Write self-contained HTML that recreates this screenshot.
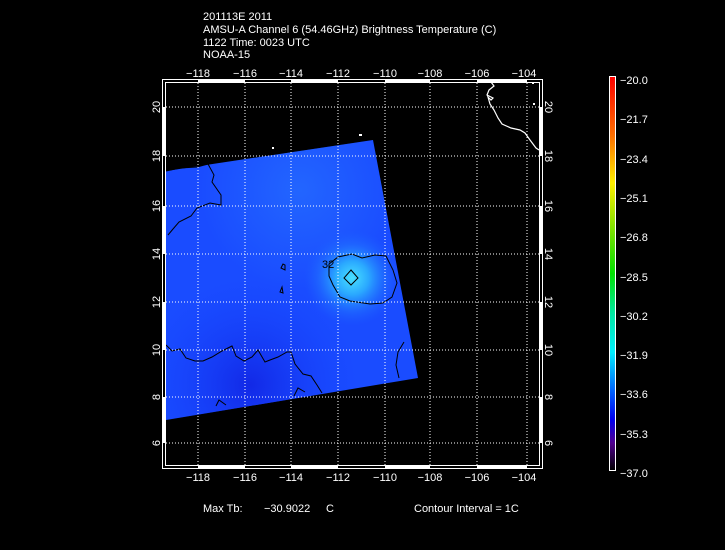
<!DOCTYPE html>
<html><head><meta charset="utf-8"><style>
html,body{margin:0;padding:0;background:#000;width:725px;height:550px;overflow:hidden}
svg{display:block}
text{font-family:"Liberation Sans",sans-serif;fill:#fff;font-size:11px}
</style></head><body>
<svg width="725" height="550" viewBox="0 0 725 550" xmlns="http://www.w3.org/2000/svg">
<defs>
<linearGradient id="cb" x1="0" y1="0" x2="0" y2="1">
<stop offset="0" stop-color="#ff0000"/>
<stop offset="0.15" stop-color="#ff7000"/>
<stop offset="0.27" stop-color="#ffee00"/>
<stop offset="0.4" stop-color="#70e000"/>
<stop offset="0.5" stop-color="#00e000"/>
<stop offset="0.6" stop-color="#00e8a0"/>
<stop offset="0.7" stop-color="#00f0ff"/>
<stop offset="0.8" stop-color="#0060ff"/>
<stop offset="0.87" stop-color="#0000f0"/>
<stop offset="0.93" stop-color="#500090"/>
<stop offset="1" stop-color="#000000"/>
</linearGradient>
<radialGradient id="hot" cx="352" cy="278" r="48" gradientUnits="userSpaceOnUse">
<stop offset="0" stop-color="#48e0ff"/>
<stop offset="0.35" stop-color="#2aa8ff"/>
<stop offset="0.7" stop-color="#2070ff" stop-opacity="0.6"/>
<stop offset="1" stop-color="#1c5cff" stop-opacity="0"/>
</radialGradient>
<radialGradient id="dk" cx="250" cy="385" r="110" gradientUnits="userSpaceOnUse">
<stop offset="0" stop-color="#1020e0" stop-opacity="0.8"/>
<stop offset="1" stop-color="#1440ff" stop-opacity="0"/>
</radialGradient>
<radialGradient id="lt" cx="300" cy="190" r="100" gradientUnits="userSpaceOnUse">
<stop offset="0" stop-color="#2670ff" stop-opacity="0.7"/>
<stop offset="1" stop-color="#2670ff" stop-opacity="0"/>
</radialGradient>
<clipPath id="sw"><polygon points="166,171 373,140 418,378 166,420"/></clipPath>
</defs>

<text x="203" y="20">201113E 2011</text>
<text x="203" y="33">AMSU-A Channel 6 (54.46GHz) Brightness Temperature (C)</text>
<text x="203" y="46">1122 Time: 0023 UTC</text>
<text x="203" y="58">NOAA-15</text>

<polygon points="166,171 373,140 418,378 166,420" fill="#1a4cff"/>
<g clip-path="url(#sw)">
<rect x="160" y="130" width="270" height="300" fill="url(#lt)"/>
<rect x="160" y="260" width="270" height="170" fill="url(#dk)"/>
<rect x="290" y="220" width="130" height="120" fill="url(#hot)"/>
</g>
<g fill="none" stroke="#000" stroke-width="1">
<path d="M329,264 L338,257 L352,254 L362,258 L375,255 L386,256 L393,270 L397,283 L392,297 L383,303 L370,304 L350,301 L340,297 L333,285 L329,276 L329,268 Z"/>
<polygon points="351,270 358,278 351,285 344,278"/>
<path d="M166,345 L172,351 L180,349 L186,358 L195,361 L203,361 L212,357 L222,351 L232,346 L236,356 L244,361 L252,357 L258,350 L265,362 L270,360 L278,357 L287,352 L291,352 L295,364 L303,374 L311,376 L317,385 L322,393"/>
<path d="M166,171 L180,168 L197,167 L208,164 L214,175 L212,182 L221,195 L221,205 L210,203 L197,208 L191,216 L179,222 L173,229 L168,235"/>
<path d="M283,264 L281,268 L285,270 L285,265 Z"/>
<path d="M282,287 L280,292 L283,293 Z"/>
<path d="M394,195 L392,205 L396,212"/>
<path d="M404,342 L398,352 L396,365 L399,378"/>
<path d="M216,406 L219,400 L226,405"/>
<path d="M294,396 L298,388 L305,392"/>
</g>
<text x="322" y="268" font-size="10" style="fill:#000">32</text>

<polyline points="491,82 494,86 489,90 487,95 493,98 491,100 488,97 490,104 494,110 498,118 502,124 511,128 520,130 525,133 530,140 536,148 539,150" fill="none" stroke="#fff" stroke-width="1.2"/>
<rect x="532" y="82" width="2" height="2" fill="#fff"/>
<rect x="533" y="103" width="2" height="2" fill="#fff"/>
<rect x="272" y="147" width="2" height="2" fill="#fff"/>
<rect x="359" y="134" width="3" height="2" fill="#fff"/>

<g stroke="#fff" stroke-width="1" stroke-dasharray="1 2">
<line x1="198" y1="83" x2="198" y2="466"/>
<line x1="245" y1="83" x2="245" y2="466"/>
<line x1="291" y1="83" x2="291" y2="466"/>
<line x1="338" y1="83" x2="338" y2="466"/>
<line x1="385" y1="83" x2="385" y2="466"/>
<line x1="430" y1="83" x2="430" y2="466"/>
<line x1="477" y1="83" x2="477" y2="466"/>
<line x1="527" y1="83" x2="527" y2="466"/>
<line x1="166" y1="107" x2="539" y2="107"/>
<line x1="166" y1="156" x2="539" y2="156"/>
<line x1="166" y1="206" x2="539" y2="206"/>
<line x1="166" y1="254" x2="539" y2="254"/>
<line x1="166" y1="302" x2="539" y2="302"/>
<line x1="166" y1="350" x2="539" y2="350"/>
<line x1="166" y1="397" x2="539" y2="397"/>
<line x1="166" y1="443" x2="539" y2="443"/>
</g>

<rect x="162.5" y="79.5" width="380" height="389" fill="none" stroke="#fff"/>
<rect x="165.5" y="82.5" width="374" height="383" fill="none" stroke="#fff"/>
<g fill="#fff">
<rect x="198" y="80" width="47" height="3"/><rect x="291" y="80" width="47" height="3"/><rect x="385" y="80" width="45" height="3"/><rect x="477" y="80" width="50" height="3"/>
<rect x="198" y="466" width="47" height="3"/><rect x="291" y="466" width="47" height="3"/><rect x="385" y="466" width="45" height="3"/><rect x="477" y="466" width="50" height="3"/>
<rect x="163" y="107" width="3" height="49"/><rect x="163" y="206" width="3" height="48"/><rect x="163" y="302" width="3" height="48"/><rect x="163" y="397" width="3" height="46"/>
<rect x="539" y="107" width="3" height="49"/><rect x="539" y="206" width="3" height="48"/><rect x="539" y="302" width="3" height="48"/><rect x="539" y="397" width="3" height="46"/>
</g>

<g text-anchor="middle">
<text x="198" y="77">−118</text><text x="245" y="77">−116</text><text x="291" y="77">−114</text><text x="338" y="77">−112</text><text x="385" y="77">−110</text><text x="430" y="77">−108</text><text x="477" y="77">−106</text><text x="524" y="77">−104</text>
<text x="198" y="481">−118</text><text x="245" y="481">−116</text><text x="291" y="481">−114</text><text x="338" y="481">−112</text><text x="385" y="481">−110</text><text x="430" y="481">−108</text><text x="477" y="481">−106</text><text x="524" y="481">−104</text>
</g>
<g text-anchor="middle" font-size="10">
<text transform="translate(160,107) rotate(-90)">20</text>
<text transform="translate(160,156) rotate(-90)">18</text>
<text transform="translate(160,206) rotate(-90)">16</text>
<text transform="translate(160,254) rotate(-90)">14</text>
<text transform="translate(160,302) rotate(-90)">12</text>
<text transform="translate(160,350) rotate(-90)">10</text>
<text transform="translate(160,397) rotate(-90)">8</text>
<text transform="translate(160,443) rotate(-90)">6</text>
<text transform="translate(545,107) rotate(90)">20</text>
<text transform="translate(545,156) rotate(90)">18</text>
<text transform="translate(545,206) rotate(90)">16</text>
<text transform="translate(545,254) rotate(90)">14</text>
<text transform="translate(545,302) rotate(90)">12</text>
<text transform="translate(545,350) rotate(90)">10</text>
<text transform="translate(545,397) rotate(90)">8</text>
<text transform="translate(545,443) rotate(90)">6</text>
</g>

<rect x="609.5" y="76.5" width="6" height="394" fill="url(#cb)" stroke="#fff"/>
<g>
<text x="620" y="84">−20.0</text>
<text x="620" y="123">−21.7</text>
<text x="620" y="163">−23.4</text>
<text x="620" y="202">−25.1</text>
<text x="620" y="241">−26.8</text>
<text x="620" y="281">−28.5</text>
<text x="620" y="320">−30.2</text>
<text x="620" y="359">−31.9</text>
<text x="620" y="398">−33.6</text>
<text x="620" y="438">−35.3</text>
<text x="620" y="477">−37.0</text>
</g>

<text x="203" y="512">Max Tb:</text>
<text x="264" y="512">−30.9022</text>
<text x="326" y="512">C</text>
<text x="414" y="512">Contour Interval = 1C</text>
</svg>
</body></html>
